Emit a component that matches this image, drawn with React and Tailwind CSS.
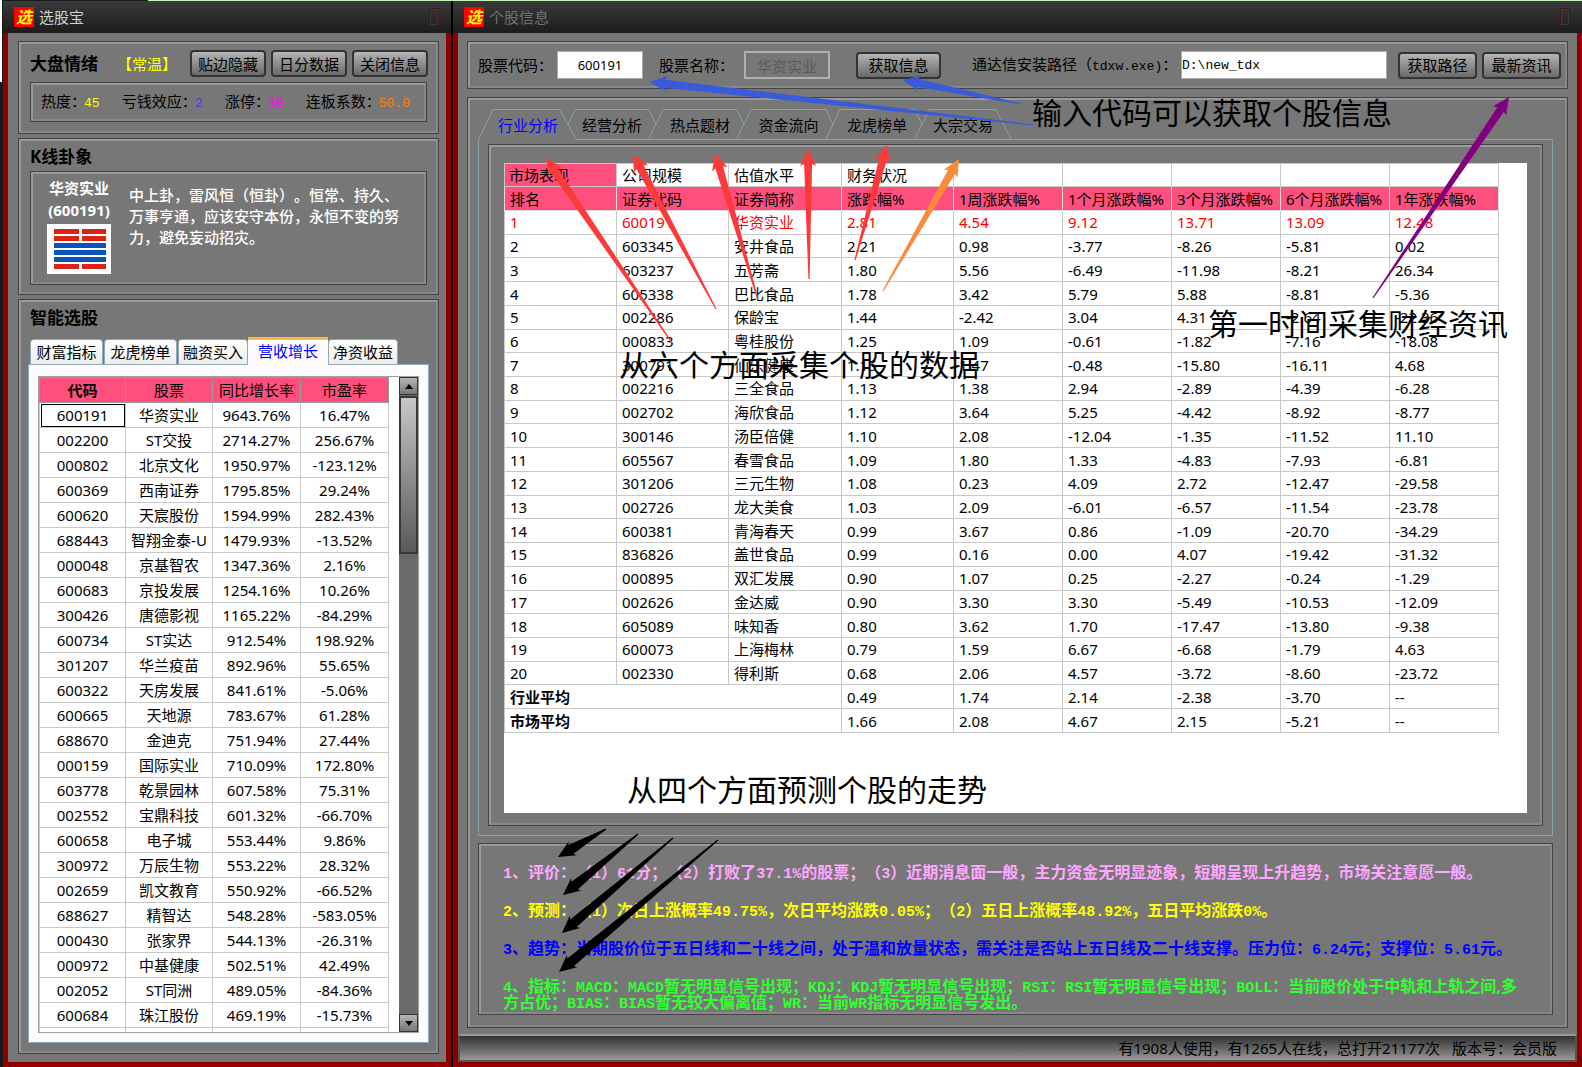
import React from 'react';

const picks = [
  ['600191', '华资实业', '9643.76%', '16.47%'],
  ['002200', 'ST交投', '2714.27%', '256.67%'],
  ['000802', '北京文化', '1950.97%', '-123.12%'],
  ['600369', '西南证券', '1795.85%', '29.24%'],
  ['600620', '天宸股份', '1594.99%', '282.43%'],
  ['688443', '智翔金泰-U', '1479.93%', '-13.52%'],
  ['000048', '京基智农', '1347.36%', '2.16%'],
  ['600683', '京投发展', '1254.16%', '10.26%'],
  ['300426', '唐德影视', '1165.22%', '-84.29%'],
  ['600734', 'ST实达', '912.54%', '198.92%'],
  ['301207', '华兰疫苗', '892.96%', '55.65%'],
  ['600322', '天房发展', '841.61%', '-5.06%'],
  ['600665', '天地源', '783.67%', '61.28%'],
  ['688670', '金迪克', '751.94%', '27.44%'],
  ['000159', '国际实业', '710.09%', '172.80%'],
  ['603778', '乾景园林', '607.58%', '75.31%'],
  ['002552', '宝鼎科技', '601.32%', '-66.70%'],
  ['600658', '电子城', '553.44%', '9.86%'],
  ['300972', '万辰生物', '553.22%', '28.32%'],
  ['002659', '凯文教育', '550.92%', '-66.52%'],
  ['688627', '精智达', '548.28%', '-583.05%'],
  ['000430', '张家界', '544.13%', '-26.31%'],
  ['000972', '中基健康', '502.51%', '42.49%'],
  ['002052', 'ST同洲', '489.05%', '-84.36%'],
  ['600684', '珠江股份', '469.19%', '-15.73%'],
];

const industryHead = ['排名', '证券代码', '证券简称', '涨跌幅%', '1周涨跌幅%', '1个月涨跌幅%', '3个月涨跌幅%', '6个月涨跌幅%', '1年涨跌幅%'];

const industryRows = [
  ['1', '600191', '华资实业', '2.81', '4.54', '9.12', '13.71', '13.09', '12.48'],
  ['2', '603345', '安井食品', '2.21', '0.98', '-3.77', '-8.26', '-5.81', '0.02'],
  ['3', '603237', '五芳斋', '1.80', '5.56', '-6.49', '-11.98', '-8.21', '26.34'],
  ['4', '605338', '巴比食品', '1.78', '3.42', '5.79', '5.88', '-8.81', '-5.36'],
  ['5', '002286', '保龄宝', '1.44', '-2.42', '3.04', '4.31', '-2.64', '-22.36'],
  ['6', '000833', '粤桂股份', '1.25', '1.09', '-0.61', '-1.82', '-7.16', '-18.08'],
  ['7', '300791', '仙乐健康', '1.15', '1.47', '-0.48', '-15.80', '-16.11', '4.68'],
  ['8', '002216', '三全食品', '1.13', '1.38', '2.94', '-2.89', '-4.39', '-6.28'],
  ['9', '002702', '海欣食品', '1.12', '3.64', '5.25', '-4.42', '-8.92', '-8.77'],
  ['10', '300146', '汤臣倍健', '1.10', '2.08', '-12.04', '-1.35', '-11.52', '11.10'],
  ['11', '605567', '春雪食品', '1.09', '1.80', '1.33', '-4.83', '-7.93', '-6.81'],
  ['12', '301206', '三元生物', '1.08', '0.23', '4.09', '2.72', '-12.47', '-29.58'],
  ['13', '002726', '龙大美食', '1.03', '2.09', '-6.01', '-6.57', '-11.54', '-23.78'],
  ['14', '600381', '青海春天', '0.99', '3.67', '0.86', '-1.09', '-20.70', '-34.29'],
  ['15', '836826', '盖世食品', '0.99', '0.16', '0.00', '4.07', '-19.42', '-31.32'],
  ['16', '000895', '双汇发展', '0.90', '1.07', '0.25', '-2.27', '-0.24', '-1.29'],
  ['17', '002626', '金达威', '0.90', '3.30', '3.30', '-5.49', '-10.53', '-12.09'],
  ['18', '605089', '味知香', '0.80', '3.62', '1.70', '-17.47', '-13.80', '-9.38'],
  ['19', '600073', '上海梅林', '0.79', '1.59', '6.67', '-6.68', '-1.79', '4.63'],
  ['20', '002330', '得利斯', '0.68', '2.06', '4.57', '-3.72', '-8.60', '-23.72'],
];

const averages = [
  ['行业平均', '0.49', '1.74', '2.14', '-2.38', '-3.70', '--'],
  ['市场平均', '1.66', '2.08', '4.67', '2.15', '-5.21', '--'],
];

const arrows = [
  { color: '#fc3a3a', neck: 4, from: [672, 343], to: [546, 158] },
  { color: '#fc3a3a', neck: 4, from: [716, 309], to: [633, 154] },
  { color: '#fc3a3a', neck: 4, from: [758, 300], to: [715, 153] },
  { color: '#fc3a3a', neck: 4, from: [809, 279], to: [808, 149] },
  { color: '#fc3a3a', neck: 4, from: [855, 260], to: [887, 145] },
  { color: '#fb8b3c', neck: 4, from: [883, 291], to: [959, 159] },
  { color: '#3a5bd9', neck: 4, from: [1033, 125], to: [650, 82] },
  { color: '#3a5bd9', neck: 4, from: [1021, 104], to: [903, 80] },
  { color: '#800080', neck: 4, from: [1373, 298], to: [1509, 97] },
  { color: '#000000', neck: 5, from: [606, 829], to: [558, 857] },
  { color: '#000000', neck: 5, from: [638, 834], to: [563, 895] },
  { color: '#000000', neck: 5, from: [673, 838], to: [562, 933] },
  { color: '#000000', neck: 5, from: [718, 840], to: [559, 972] },
];

const notes = [
  { text: '输入代码可以获取个股信息', place: 'left-[1032px] top-[93px]' },
  { text: '从六个方面采集个股的数据', place: 'left-[619px] top-[345px]' },
  { text: '第一时间采集财经资讯', place: 'left-[1208px] top-[304px]' },
  { text: '从四个方面预测个股的走势', place: 'left-[627px] top-[770px]' },
];

// Tapered arrow: a point at the tail, a barbed head at the tip
function arrowPoints([x1, y1], [x2, y2], neck) {
  const len = Math.hypot(x2 - x1, y2 - y1);
  const ux = (x2 - x1) / len;
  const uy = (y2 - y1) / len;
  const at = (back, side) => `${x2 - ux * back - uy * side},${y2 - uy * back + ux * side}`;
  return [at(0, 0), at(17, 8), at(15, neck), at(len, 0.6), at(len, -0.6), at(15, -neck), at(17, -8)].join(' ');
}

function Frame({ className = '', children }) {
  return (
    <div className={`border border-[#444] ${className}`}>
      <div className="h-full border-2 border-t-[#999] border-l-[#999] border-r-[#888] border-b-[#888] border-double">{children}</div>
    </div>
  );
}

function SkinButton({ className = '', children }) {
  return (
    <button
      type="button"
      className={`h-[27px] shrink-0 rounded-sm border-2 border-[#333] bg-linear-to-b from-[#b5b5b5] via-[#8e8e8e] to-[#6a6a6a] text-center leading-5 whitespace-nowrap ${className}`}
    >
      {children}
    </button>
  );
}

function TitleBar({ title, className }) {
  return (
    <header className="flex h-8 items-center bg-linear-to-b from-[#3a3a3a] to-[#1c1c1c] pl-[11px] pr-3">
      <span className="flex h-5 w-5 items-center justify-center bg-[#ff0000] text-base leading-5 font-bold text-[#ffff00] italic">选</span>
      <h1 className={`ml-[5px] flex-1 text-[15px] leading-5 ${className}`}>{title}</h1>
      <button type="button" aria-label="关闭" className="h-[18px] w-[10px] border border-[#4a1414] shadow-[inset_0_0_0_1px_#3a3a3a]" />
    </header>
  );
}

function ArrowGlyph({ down }) {
  return (
    <svg viewBox="0 0 8 5" className="h-[5px] w-2" fill="#000">
      {down ? <path d="M0 0h8L4 5z" /> : <path d="M4 0l4 5H0z" />}
    </svg>
  );
}

function PickerTab({ label, active, width }) {
  if (active) {
    return (
      <button type="button" role="tab" aria-selected="true" className="relative z-10 -mb-px h-[28px] w-20 border-t-[3px] border-[#ffb83a] bg-[#fcfcfe] pb-1 leading-5 text-[#0000ff]">
        {label}
      </button>
    );
  }
  return (
    <button type="button" role="tab" aria-selected="false" className={`h-[25px] rounded-t-sm border border-b-0 border-[#91a7b4] bg-linear-to-b from-white to-[#ececea] leading-5 whitespace-nowrap ${width}`}>
      {label}
    </button>
  );
}

function Stat({ label, value, color }) {
  return (
    <div className="flex items-baseline">
      <dt>{label}：</dt>
      <dd className={`-ml-[2px] text-[13px] font-['Liberation_Mono',monospace] ${color}`}>{value}</dd>
    </div>
  );
}

function SentimentPanel() {
  return (
    <Frame className="h-[93px]">
      <div className="flex items-center pt-[6px] pl-[9px] pr-2">
        <h2 className="w-[87px] text-[17px] leading-6 font-bold">大盘情绪</h2>
        <span className="w-[60px] text-[15px] leading-5 whitespace-nowrap text-[#ffff00]">【常温】</span>
        <div className="flex flex-1 justify-end gap-[5px]">
          <SkinButton className="w-[76px]">贴边隐藏</SkinButton>
          <SkinButton className="w-[76px]">日分数据</SkinButton>
          <SkinButton className="w-[76px]">关闭信息</SkinButton>
        </div>
      </div>
      <Frame className="mx-[9px] mt-[5px] h-10">
        <dl className="flex h-full items-center justify-between pl-2 pr-[14px] leading-5 whitespace-nowrap">
          <Stat label="热度" value="45" color="text-[#ffff00]" />
          <Stat label="亏钱效应" value="2" color="text-[#5a32e0]" />
          <Stat label="涨停" value="38" color="text-[#ff00ff]" />
          <Stat label="连板系数" value="50.0" color="text-[#ff8000]" />
        </dl>
      </Frame>
    </Frame>
  );
}

function HexagramPanel() {
  return (
    <Frame className="mt-1 h-[157px]">
      <h2 className="pt-1 pl-[9px] text-[17px] leading-6 font-bold">K线卦象</h2>
      <Frame className="mx-[9px] mt-[2px] h-[114px]">
        <div className="flex text-white">
          <div className="flex w-[92px] shrink-0 flex-col items-center pt-[3px] text-[15px] leading-[22px] font-bold">
            <span>华资实业</span>
            <span>(600191)</span>
            <svg viewBox="0 0 64 50" className="mt-[3px] h-[50px] w-16 bg-white">
              <g fill="#dc2318">
                <path d="M7 5h25v5H7zM35 5h24v5H35zM7 12h25v5H7zM35 12h24v5H35zM7 40h25v5H7zM35 40h24v5H35z" />
              </g>
              <path fill="#0b55b8" d="M7 19h52v5H7zM7 26h52v5H7zM7 33h52v5H7z" />
            </svg>
          </div>
          <p className="pt-[11px] pl-1 pr-[21px] leading-[21px] font-medium">中上卦，雷风恒（恒卦）。恒常、持久、万事亨通，应该安守本份，永恒不变的努力，避免妄动招灾。</p>
        </div>
      </Frame>
    </Frame>
  );
}

function PickerPanel() {
  return (
    <Frame className="mt-1 flex-1">
      <h2 className="pt-1 pl-[9px] text-[17px] leading-6 font-bold">智能选股</h2>
      <div role="tablist" className="mt-[7px] flex items-end pl-[9px]">
        <PickerTab label="财富指标" width="w-[73px] mr-px" />
        <PickerTab label="龙虎榜单" width="w-[73px] mr-px" />
        <PickerTab label="融资买入" width="w-[70px]" />
        <PickerTab label="营收增长" active />
        <PickerTab label="净资收益" width="w-[70px]" />
      </div>
      <div className="mx-[7px] h-[679px] border border-[#91a7b4] bg-[#fcfcfe] px-[9px] pt-[11px] pb-[9px]">
        <div className="flex h-full overflow-hidden border border-[#a0a0a0] bg-white">
          <div className="flex-1 overflow-hidden">
            <table className="w-[349px] table-fixed border-collapse text-center leading-5">
              <colgroup>
                <col className="w-[86px]" />
                <col className="w-[87px]" />
                <col className="w-[88px]" />
                <col className="w-[88px]" />
              </colgroup>
              <thead>
                <tr className="h-[25px] bg-[#ff507d]">
                  <th className="border border-[#999] p-0 font-bold">代码</th>
                  <th className="border border-[#999] p-0 font-normal">股票</th>
                  <th className="border border-[#999] p-0 font-normal whitespace-nowrap">同比增长率</th>
                  <th className="border border-[#999] p-0 font-normal">市盈率</th>
                </tr>
              </thead>
              <tbody>
                {picks.map((row, i) => (
                  <tr key={row[0]} className="h-[25px]">
                    {row.map((cell, j) => (
                      <td key={j} className={`border border-[#c8c8c8] p-0 whitespace-nowrap ${i === 0 && j === 0 ? 'outline outline-1 -outline-offset-2 outline-black' : ''}`}>
                        {cell}
                      </td>
                    ))}
                  </tr>
                ))}
                <tr className="h-[25px]">
                  <td className="border border-[#c8c8c8]" />
                  <td className="border border-[#c8c8c8]" />
                  <td className="border border-[#c8c8c8]" />
                  <td className="border border-[#c8c8c8]" />
                </tr>
              </tbody>
            </table>
          </div>
          <div className="flex w-[19px] flex-col bg-[#6a6a6a]">
            <button type="button" aria-label="向上" className="flex h-[18px] items-center justify-center border border-[#333] bg-linear-to-b from-[#b5b5b5] to-[#777]">
              <ArrowGlyph />
            </button>
            <div className="mt-px h-[158px] border-2 border-[#383838] bg-linear-to-b from-[#c8c8c8] to-[#5a5a5a]" />
            <button type="button" aria-label="向下" className="mt-auto flex h-[18px] items-center justify-center border border-[#333] bg-linear-to-b from-[#b5b5b5] to-[#777]">
              <ArrowGlyph down />
            </button>
          </div>
        </div>
      </div>
    </Frame>
  );
}

function QueryBar() {
  return (
    <Frame className="h-12">
      <form className="flex h-full items-center pl-2 pr-1 whitespace-nowrap">
        <label htmlFor="code" className="w-[79px] leading-5">股票代码：</label>
        <input id="code" defaultValue="600191" className="h-7 w-[86px] border border-[#aaa] bg-white text-center text-[13px]" />
        <label htmlFor="name" className="ml-4 w-[85px] leading-5">股票名称：</label>
        <input id="name" disabled defaultValue="华资实业" className="h-7 w-[86px] border-2 border-[#b0b0b0] text-center text-[#5a5a5a]" />
        <SkinButton className="ml-[26px] w-[85px]">获取信息</SkinButton>
        <label htmlFor="path" className="ml-[31px] w-[209px] leading-5">
          通达信安装路径（<span className="text-[13px] font-['Liberation_Mono',monospace]">tdxw.exe)</span>：
        </label>
        <input id="path" defaultValue="D:\new_tdx" className="h-7 min-w-0 flex-1 border border-[#aaa] bg-white text-[13px] font-['Liberation_Mono',monospace]" />
        <SkinButton className="ml-[11px] w-[79px]">获取路径</SkinButton>
        <SkinButton className="ml-[5px] w-[79px]">最新资讯</SkinButton>
      </form>
    </Frame>
  );
}

function IndustryTable() {
  return (
    <table className="h-[570px] w-[994px] table-fixed border-collapse text-left leading-5">
      <colgroup>
        <col className="w-[112px]" />
        <col className="w-[112px]" />
        <col className="w-[113px]" />
        <col className="w-[112px]" />
        <col className="w-[109px]" />
        <col className="w-[109px]" />
        <col className="w-[109px]" />
        <col className="w-[109px]" />
        <col className="w-[109px]" />
      </colgroup>
      <thead>
        <tr className="h-[23px]">
          <th className="border border-[#c8c8c8] bg-[#ff507d] py-0 pl-1 font-normal">市场表现</th>
          <th className="border border-[#c8c8c8] py-0 pl-[5px] font-normal">公司规模</th>
          <th className="border border-[#c8c8c8] py-0 pl-[5px] font-normal">估值水平</th>
          <th className="border border-[#c8c8c8] py-0 pl-[5px] font-normal">财务状况</th>
          {[0, 1, 2, 3, 4].map((n) => <td key={n} className="border border-[#c8c8c8]" />)}
        </tr>
        <tr className="h-6 bg-[#ff507d]">
          {industryHead.map((label) => (
            <th key={label} className="border border-[#ddd] py-0 pl-[5px] font-normal whitespace-nowrap">{label}</th>
          ))}
        </tr>
      </thead>
      <tbody>
        {industryRows.map((row, i) => (
          <tr key={row[0]} className={i === 0 ? 'text-[#ff0000]' : ''}>
            {row.map((cell, j) => (
              <td key={j} className="border border-[#c8c8c8] py-0 pl-[5px] whitespace-nowrap">{cell}</td>
            ))}
          </tr>
        ))}
        {averages.map(([label, ...cells]) => (
          <tr key={label}>
            <th colSpan={3} className="border border-[#c8c8c8] py-0 pl-[5px] font-bold">{label}</th>
            {cells.map((cell, j) => (
              <td key={j} className="border border-[#c8c8c8] py-0 pl-[5px]">{cell}</td>
            ))}
          </tr>
        ))}
      </tbody>
    </table>
  );
}

function AnalysisTabs() {
  return (
    <div role="tablist" className="relative flex h-8 items-center pt-[2px] whitespace-nowrap">
      <svg className="absolute top-0 left-0 h-8 w-[540px]" fill="none" stroke="#8aa0ab">
        <path d="M0.5 32 L15 1.5 H82 L98 31.5 H540" />
        <path d="M90 17 L97 1.5 H171 L178 17 M171 31 L185 1.5 H259 L266 17 M259 31 L273 1.5 H348 L355 17 M348 31 L362 1.5 H437 L444 17 M437 31 L451 1.5 H518 L533 31" />
      </svg>
      <button type="button" role="tab" aria-selected="true" className="relative ml-[10px] w-20 leading-5 text-[#0000ff]">行业分析</button>
      <button type="button" role="tab" aria-selected="false" className="relative w-[88px] leading-5">经营分析</button>
      <button type="button" role="tab" aria-selected="false" className="relative w-[88px] leading-5">热点题材</button>
      <button type="button" role="tab" aria-selected="false" className="relative w-[89px] leading-5">资金流向</button>
      <button type="button" role="tab" aria-selected="false" className="relative w-[88px] leading-5">龙虎榜单</button>
      <button type="button" role="tab" aria-selected="false" className="relative w-[84px] leading-5">大宗交易</button>
      <div className="flex-1 self-end border-b border-[#8aa0ab]" />
    </div>
  );
}

// Latin letters and digits are set in the half-width face, the rest in full width
function ForecastLine({ text, color }) {
  return (
    <p className={color}>
      {text.split(/([\w.%]+)/).map((part, i) => (
        i % 2 ? <span key={i} className="text-[15px] leading-[0px] font-['Liberation_Mono',monospace]">{part}</span> : part
      ))}
    </p>
  );
}

function Forecast() {
  return (
    <Frame className="mr-3 ml-2 mt-[7px] h-[172px]">
      <div className="flex flex-col gap-[22px] pt-[18px] pl-[22px] pr-6 text-base leading-4 font-bold">
        <ForecastLine color="text-[#ffa8ff]" text="1、评价：（1）61分；（2）打败了37.1%的股票；（3）近期消息面一般，主力资金无明显迹象，短期呈现上升趋势，市场关注意愿一般。" />
        <ForecastLine color="text-[#ffff00]" text="2、预测：（1）次日上涨概率49.75%，次日平均涨跌0.05%；（2）五日上涨概率48.92%，五日平均涨跌0%。" />
        <ForecastLine color="text-[#0000ff]" text="3、趋势：当期股价位于五日线和二十线之间，处于温和放量状态，需关注是否站上五日线及二十线支撑。压力位：6.24元；支撑位：5.61元。" />
        <ForecastLine color="text-[#32ff32]" text="4、指标：MACD：MACD暂无明显信号出现；KDJ：KDJ暂无明显信号出现；RSI：RSI暂无明显信号出现；BOLL：当前股价处于中轨和上轨之间,多方占优；BIAS：BIAS暂无较大偏离值；WR：当前WR指标无明显信号发出。" />
      </div>
    </Frame>
  );
}

export default function App() {
  return (
    <div className="relative flex min-h-screen overflow-hidden bg-[#1a1a1a] pl-[3px] pt-px font-['Noto_Sans','Noto_Sans_CJK_SC',sans-serif] text-[15px] leading-5 text-black [text-spacing-trim:space-all]">
      <div className="absolute top-0 left-0 h-[82px] w-[2px] bg-white" />
      <div className="absolute top-0 left-[148px] right-0 h-px bg-[#c8f0b8]" />

      <section className="flex w-[450px] shrink-0 flex-col border-r-2 border-black">
        <TitleBar title="选股宝" className="text-[#d0d0d0]" />
        <div className="flex flex-1 flex-col border-x-[5px] border-b-[5px] border-[#8e0000] bg-[#777] pt-2 pr-[7px] pb-2 pl-[10px]">
          <SentimentPanel />
          <HexagramPanel />
          <PickerPanel />
        </div>
      </section>

      <section className="flex min-w-0 flex-1 flex-col">
        <TitleBar title="个股信息" className="text-[#707070]" />
        <div className="flex flex-1 flex-col border-x-[5px] border-b-[5px] border-[#8e0000] bg-[#777]">
          <div className="flex flex-1 flex-col px-[9px] pt-2 pb-[6px]">
            <QueryBar />
            <Frame className="mt-2 flex-1">
              <div className="mr-3 ml-2 pt-2">
                <AnalysisTabs />
                <div className="h-[696px] border border-t-0 border-[#8aa0ab] px-[9px] pt-1 pb-[9px]">
                  <Frame className="h-full">
                    <div className="px-[13px] pt-4">
                      <div className="h-[650px] bg-white">
                        <IndustryTable />
                      </div>
                    </div>
                  </Frame>
                </div>
              </div>
              <Forecast />
            </Frame>
          </div>
          <footer className="flex h-7 items-center justify-end gap-3 border-2 border-[#555] border-t-[#999] bg-linear-to-b from-[#333] to-[#999] px-[18px] leading-5">
            <span>有1908人使用，有1265人在线，总打开21177次</span>
            <span>版本号：会员版</span>
          </footer>
        </div>
      </section>

      {/* Callouts drawn over both windows */}
      <svg className="pointer-events-none absolute top-0 left-0 h-[1067px] w-[1582px]">
        {arrows.map((a) => (
          <polygon key={a.from.join()} points={arrowPoints(a.from, a.to, a.neck)} fill={a.color} />
        ))}
      </svg>
      {notes.map((note) => (
        <p key={note.text} className={`pointer-events-none absolute text-[30px] leading-10 whitespace-nowrap ${note.place}`}>{note.text}</p>
      ))}
    </div>
  );
}
